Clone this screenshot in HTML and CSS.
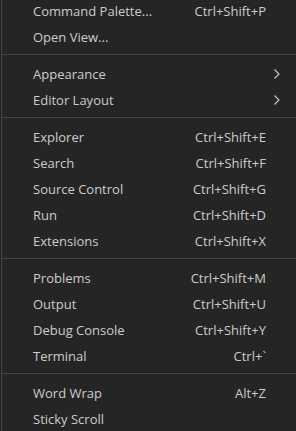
FILE: index.html
```html
<!DOCTYPE html>
<html>
<head>
    <title>View Menu</title>
    <link rel="stylesheet" href="styles.css">
</head>
<body>
    <!-- View menu, scrolled a little so the top row is clipped -->
    <div class="menu">
        <ul class="menu-list">
            <li class="item"><span class="label">Command Palette...</span><span class="keys">Ctrl+Shift+P</span><span class="more"></span></li>
            <li class="item"><span class="label">Open View...</span><span class="keys"></span><span class="more"></span></li>
            <li class="separator"></li>
            <li class="item"><span class="label">Appearance</span><span class="keys"></span><span class="more"><svg class="chevron" width="16" height="16" viewBox="0 0 16 16"><path d="M5.5 3.5 L10 8 L5.5 12.5" fill="none" stroke="currentColor" stroke-width="1.1"/></svg></span></li>
            <li class="item"><span class="label">Editor Layout</span><span class="keys"></span><span class="more"><svg class="chevron" width="16" height="16" viewBox="0 0 16 16"><path d="M5.5 3.5 L10 8 L5.5 12.5" fill="none" stroke="currentColor" stroke-width="1.1"/></svg></span></li>
            <li class="separator"></li>
            <li class="item"><span class="label">Explorer</span><span class="keys">Ctrl+Shift+E</span><span class="more"></span></li>
            <li class="item"><span class="label">Search</span><span class="keys">Ctrl+Shift+F</span><span class="more"></span></li>
            <li class="item"><span class="label">Source Control</span><span class="keys">Ctrl+Shift+G</span><span class="more"></span></li>
            <li class="item"><span class="label">Run</span><span class="keys">Ctrl+Shift+D</span><span class="more"></span></li>
            <li class="item"><span class="label">Extensions</span><span class="keys">Ctrl+Shift+X</span><span class="more"></span></li>
            <li class="separator"></li>
            <li class="item"><span class="label">Problems</span><span class="keys">Ctrl+Shift+M</span><span class="more"></span></li>
            <li class="item"><span class="label">Output</span><span class="keys">Ctrl+Shift+U</span><span class="more"></span></li>
            <li class="item"><span class="label">Debug Console</span><span class="keys">Ctrl+Shift+Y</span><span class="more"></span></li>
            <li class="item"><span class="label">Terminal</span><span class="keys">Ctrl+`</span><span class="more"></span></li>
            <li class="separator"></li>
            <li class="item"><span class="label">Word Wrap</span><span class="keys">Alt+Z</span><span class="more"></span></li>
            <li class="item"><span class="label">Sticky Scroll</span><span class="keys"></span><span class="more"></span></li>
        </ul>
    </div>
</body>
</html>
```

FILE: styles.css
```css
html, body {
    margin: 0;
    padding: 0;
    height: 100%;
    overflow: hidden;
}
body {
    font-family: "Open Sans", "Noto Sans", sans-serif;
    font-size: 13px;
    background-color: #1e1e1e;
    color: #cccccc;
}
.menu {
    margin-left: 1px;
    height: 100%;
    background-color: #252526;
    border-left: 1px solid #454545;
}
.menu-list {
    list-style: none;
    margin: 0;
    padding: 0;
    position: relative;
    top: -2px;
}
.item {
    display: flex;
    align-items: center;
    height: 26px;
    padding-left: 31px;
    white-space: nowrap;
}
.label {
    flex: 1;
}
.keys {
    text-align: right;
}
.more {
    width: 30px;
    display: flex;
    align-items: center;
}
.chevron {
    margin-left: 3px;
}
.separator {
    height: 0;
    margin: 4px 0 6px;
    border-bottom: 1px solid #454545;
}
```
